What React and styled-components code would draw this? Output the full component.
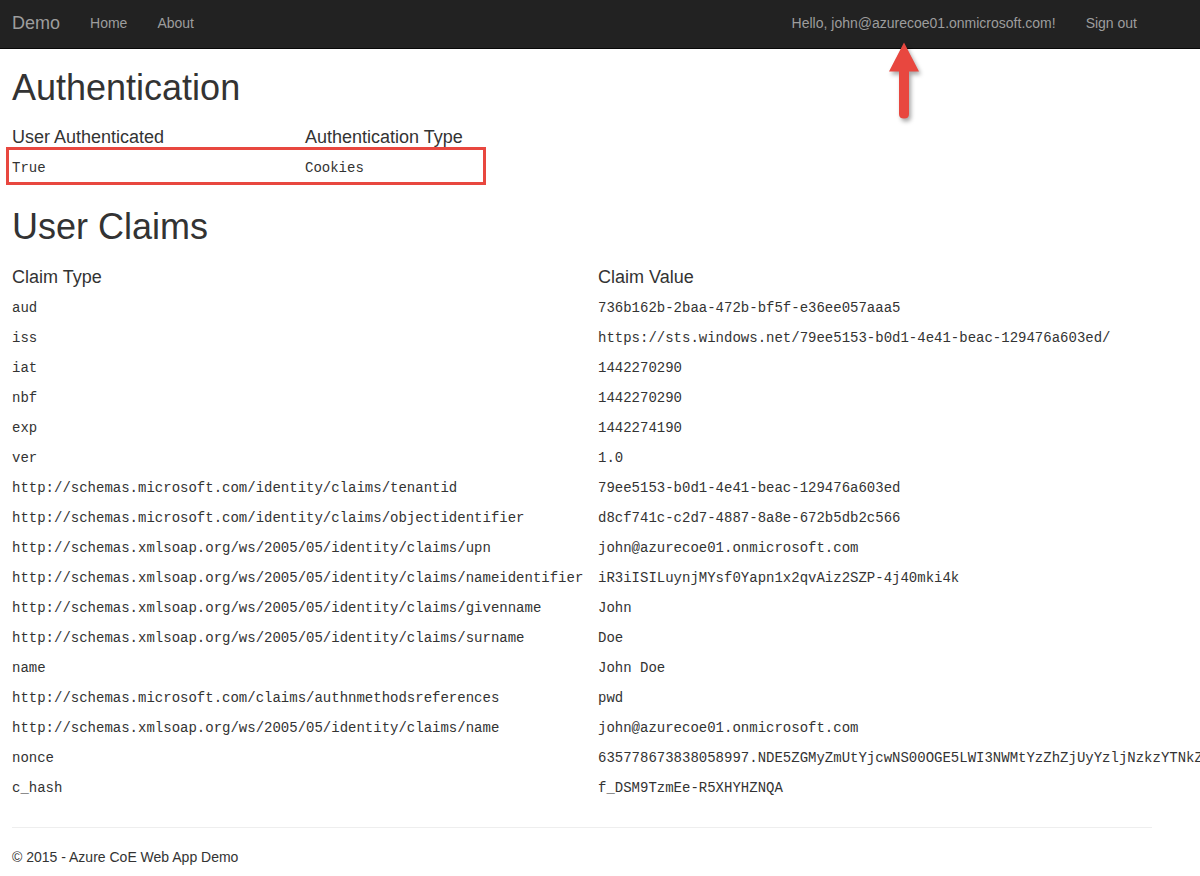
import React from 'react';
import styled, { createGlobalStyle } from 'styled-components';

const GlobalStyle = createGlobalStyle`
  html, body {
    margin: 0;
    overflow: hidden;
  }
  body {
    font-family: "Liberation Sans", Arial, sans-serif;
    font-size: 14px;
    line-height: 20px;
    color: #333;
    background: #fff;
  }
`;

const colors = {
  navBg: '#222',
  navBorder: '#080808',
  navText: '#9d9d9d',
  text: '#333',
  rule: '#eee',
  mark: '#e8473f',
};

const Page = styled.div`
  position: relative;
  width: 1200px;
  min-height: 876px;
`;

const Navbar = styled.nav`
  height: 48px;
  background: ${colors.navBg};
  border-bottom: 1px solid ${colors.navBorder};
`;

const NavInner = styled.div`
  display: flex;
  align-items: center;
  box-sizing: border-box;
  height: 100%;
  width: 1152px;
  padding: 0 0 2px 12px;
`;

const Brand = styled.a`
  font-size: 18px;
  line-height: 20px;
  color: ${colors.navText};
  text-decoration: none;
  padding-right: 15px;
`;

const NavLink = styled.a`
  font-size: 14px;
  line-height: 20px;
  color: ${colors.navText};
  text-decoration: none;
  padding: 0 15px;
`;

const NavRight = styled.div`
  display: flex;
  margin-left: auto;
`;

const Main = styled.main`
  display: flex;
  flex-direction: column;
  width: 1140px;
  padding-left: 12px;
`;

const Title = styled.h2`
  font-size: 36px;
  line-height: 1.1;
  font-weight: 400;
  margin: ${p => p.$top}px 0 0;
  color: ${colors.text};
`;

const HeadRow = styled.div`
  display: grid;
  grid-template-columns: ${p => p.$col}px 1fr;
  margin-top: ${p => p.$top}px;
  font-size: 18px;
  line-height: 1.1;
`;

const Rows = styled.div`
  display: flex;
  flex-direction: column;
  margin-top: ${p => p.$top}px;
`;

const Row = styled.div`
  position: relative;
  display: grid;
  grid-template-columns: ${p => p.$col}px 1fr;
  height: 30px;
  font-family: "Liberation Mono", "Courier New", monospace;
  font-size: 14px;
  line-height: 30px;
  white-space: nowrap;

  ${p => p.$marked && `
    &::after {
      content: '';
      position: absolute;
      left: -6px;
      top: -6px;
      width: 474px;
      height: 32px;
      border: 3px solid ${colors.mark};
    }
  `}
`;

const Rule = styled.hr`
  width: 1140px;
  margin: 24px 0 0;
  border: 0;
  border-top: 1px solid ${colors.rule};
`;

const Footer = styled.footer`
  margin-top: 19px;
  font-size: 14px;
  line-height: 20px;
`;

const Arrow = styled.svg`
  position: absolute;
  left: 885px;
  top: 38px;
  filter: drop-shadow(2px 3px 2px rgba(0, 0, 0, 0.35));
`;

const claims = [
  ['aud', '736b162b-2baa-472b-bf5f-e36ee057aaa5'],
  ['iss', 'https://sts.windows.net/79ee5153-b0d1-4e41-beac-129476a603ed/'],
  ['iat', '1442270290'],
  ['nbf', '1442270290'],
  ['exp', '1442274190'],
  ['ver', '1.0'],
  ['http://schemas.microsoft.com/identity/claims/tenantid', '79ee5153-b0d1-4e41-beac-129476a603ed'],
  ['http://schemas.microsoft.com/identity/claims/objectidentifier', 'd8cf741c-c2d7-4887-8a8e-672b5db2c566'],
  ['http://schemas.xmlsoap.org/ws/2005/05/identity/claims/upn', 'john@azurecoe01.onmicrosoft.com'],
  ['http://schemas.xmlsoap.org/ws/2005/05/identity/claims/nameidentifier', 'iR3iISILuynjMYsf0Yapn1x2qvAiz2SZP-4j40mki4k'],
  ['http://schemas.xmlsoap.org/ws/2005/05/identity/claims/givenname', 'John'],
  ['http://schemas.xmlsoap.org/ws/2005/05/identity/claims/surname', 'Doe'],
  ['name', 'John Doe'],
  ['http://schemas.microsoft.com/claims/authnmethodsreferences', 'pwd'],
  ['http://schemas.xmlsoap.org/ws/2005/05/identity/claims/name', 'john@azurecoe01.onmicrosoft.com'],
  ['nonce', '635778673838058997.NDE5ZGMyZmUtYjcwNS00OGE5LWI3NWMtYzZhZjUyYzljNzkzYTNkZjE2NDE3NGQyLTRkYzAtNDQ5'],
  ['c_hash', 'f_DSM9TzmEe-R5XHYHZNQA'],
];

const App = () => (
  <Page>
    <GlobalStyle />
    <Navbar>
      <NavInner>
        <Brand href="#">Demo</Brand>
        <NavLink href="#">Home</NavLink>
        <NavLink href="#">About</NavLink>
        <NavRight>
          <NavLink href="#">Hello, john@azurecoe01.onmicrosoft.com!</NavLink>
          <NavLink href="#">Sign out</NavLink>
        </NavRight>
      </NavInner>
    </Navbar>

    <Main>
      <Title $top={19}>Authentication</Title>
      <HeadRow $col={293} $top={20}>
        <span>User Authenticated</span>
        <span>Authentication Type</span>
      </HeadRow>
      <Rows $top={6}>
        <Row $col={293} $marked>
          <span>True</span>
          <span>Cookies</span>
        </Row>
      </Rows>

      <Title $top={24}>User Claims</Title>
      <HeadRow $col={586} $top={21}>
        <span>Claim Type</span>
        <span>Claim Value</span>
      </HeadRow>
      <Rows $top={5}>
        {claims.map(([type, value]) => (
          <Row $col={586} key={type}>
            <span>{type}</span>
            <span>{value}</span>
          </Row>
        ))}
      </Rows>

      <Rule />
      <Footer>© 2015 - Azure CoE Web App Demo</Footer>
    </Main>

    <Arrow width="40" height="86" viewBox="0 0 40 86">
      <path d="M19 4.5 L34 33.5 L24 33.5 L24 76 Q24 80.5 19 80.5 Q14 80.5 14 76 L14 33.5 L4 33.5 Z" fill={colors.mark} />
    </Arrow>
  </Page>
);

export default App;
